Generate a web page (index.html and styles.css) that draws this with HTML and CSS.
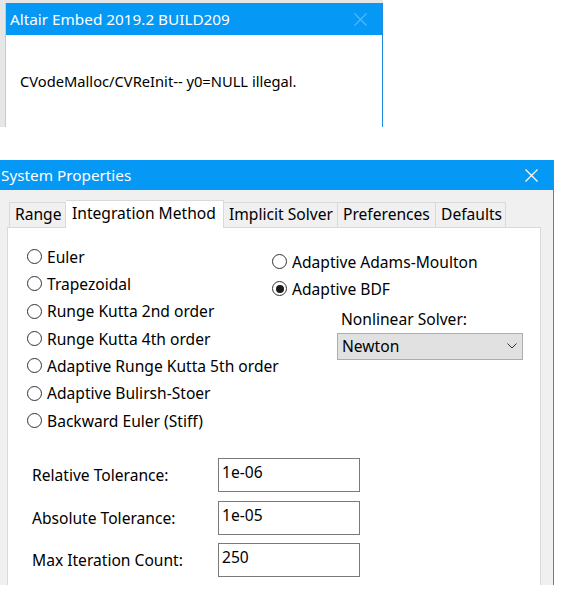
FILE: index.html
```html
<!DOCTYPE html>
<html>
<head>
<meta charset="utf-8">
<link rel="stylesheet" href="styles.css">
</head>
<body>
<div class="msg-wrap">
  <div class="msg">
    <div class="titlebar">
      <span class="title">Altair Embed 2019.2 BUILD209</span>
      <svg class="close inactive" width="13" height="13" viewBox="0 0 13 13"><path d="M0.5 0.5L12.5 12.5M12.5 0.5L0.5 12.5" stroke="currentColor" stroke-width="1.1" fill="none"/></svg>
    </div>
    <div class="msg-body">CVodeMalloc/CVReInit-- y0=NULL illegal.</div>
  </div>
</div>

<div class="props">
  <div class="titlebar tb2">
    <span class="title t2">System Properties</span>
    <svg class="close" width="13" height="13" viewBox="0 0 13 13"><path d="M0.5 0.5L12.5 12.5M12.5 0.5L0.5 12.5" stroke="currentColor" stroke-width="1.2" fill="none"/></svg>
  </div>
  <div class="props-body">
    <div class="tabs">
      <div class="tab w-range">Range</div>
      <div class="tab active w-int">Integration Method</div>
      <div class="tab w-imp">Implicit Solver</div>
      <div class="tab w-pref">Preferences</div>
      <div class="tab w-def">Defaults</div>
    </div>
    <div class="panel">
      <div class="methods">
        <div class="col-left">
          <div class="radio"><span class="dot"></span>Euler</div>
          <div class="radio"><span class="dot"></span>Trapezoidal</div>
          <div class="radio"><span class="dot"></span>Runge Kutta 2nd order</div>
          <div class="radio"><span class="dot"></span>Runge Kutta 4th order</div>
          <div class="radio"><span class="dot"></span>Adaptive Runge Kutta 5th order</div>
          <div class="radio"><span class="dot"></span>Adaptive Bulirsh-Stoer</div>
          <div class="radio"><span class="dot"></span>Backward Euler (Stiff)</div>
        </div>
        <div class="col-right">
          <div class="radio"><span class="dot"></span>Adaptive Adams-Moulton</div>
          <div class="radio"><span class="dot checked"></span>Adaptive BDF</div>
          <div class="solver-label">Nonlinear Solver:</div>
          <div class="select">
            <span>Newton</span>
            <svg class="chev" width="10" height="6" viewBox="0 0 10 6"><path d="M0.5 0.5L5 5L9.5 0.5" stroke="#333" stroke-width="1" fill="none"/></svg>
          </div>
        </div>
      </div>
      <div class="tols">
        <div class="tol-row"><span class="tol-label">Relative Tolerance:</span><div class="tol-box">1e-06</div></div>
        <div class="tol-row"><span class="tol-label">Absolute Tolerance:</span><div class="tol-box">1e-05</div></div>
        <div class="tol-row"><span class="tol-label">Max Iteration Count:</span><div class="tol-box">250</div></div>
      </div>
    </div>
  </div>
</div>
</body>
</html>
```

FILE: styles.css
```css
html, body {
  margin: 0;
  padding: 0;
  background: #ffffff;
}
body {
  font-family: "Noto Sans", "Open Sans", "Liberation Sans", sans-serif;
  font-size: 15.6px;
  color: #000;
  width: 582px;
  height: 608px;
  overflow: hidden;
}

/* ---------- message box ---------- */
.msg-wrap {
  width: 383px;
  height: 127px;
  box-sizing: border-box;
  padding: 3px 0 0 5px;
  background: #e6e6e6;
  display: flex;
}
.msg {
  flex: 1;
  background: #fff;
  border-left: 1px solid #c9c9c9;
  border-right: 1px solid #1e8be0;
  display: flex;
  flex-direction: column;
}
.titlebar {
  height: 32px;
  background: #0598f5;
  display: flex;
  align-items: center;
  justify-content: space-between;
  color: #fff;
}
.title {
  padding-left: 4px;
  line-height: 20px;
  font-size: 15.3px;
  color: #fff;
}
.close {
  margin-right: 15px;
  color: #fff;
}
.close.inactive {
  color: #55b8f8;
}
.msg-body {
  padding: 36px 0 0 14px;
  line-height: 20px;
  font-size: 14.7px;
}

/* ---------- properties dialog ---------- */
.props {
  margin-top: 33px;
  width: 554px;
  height: 425px;
  box-sizing: border-box;
  background: #f0f0f0;
  border-right: 1px solid #2d8fdc;
  overflow: hidden;
  display: flex;
  flex-direction: column;
}
.tb2 {
  height: 30px;
  flex: none;
}
.t2 {
  padding-left: 1px;
}
.props-body {
  padding-left: 7px;
  display: flex;
  flex-direction: column;
}
.tabs {
  margin-top: 10px;
  padding-left: 2px;
  display: flex;
  align-items: flex-end;
  height: 28px;
  margin-bottom: -1px;
  position: relative;
  z-index: 1;
}
.tab {
  box-sizing: border-box;
  height: 25px;
  margin-bottom: 1px;
  border: 1px solid #d9d9d9;
  border-bottom: none;
  border-left: none;
  background: #f0f0f0;
  line-height: 22px;
  padding-left: 5px;
  white-space: nowrap;
}
.tab:first-child {
  border-left: 1px solid #d9d9d9;
}
.tab.active {
  height: 28px;
  margin-bottom: 0;
  background: #fff;
  line-height: 24px;
  padding-left: 6px;
}
.w-range { width: 57px; }
.w-int { width: 158px; }
.w-imp { width: 114px; }
.w-pref { width: 98px; }
.w-def { width: 70px; }

.panel {
  width: 534px;
  height: 400px;
  box-sizing: border-box;
  background: #fff;
  border: 1px solid #d9d9d9;
}
.methods {
  display: grid;
  grid-template-columns: 245px 1fr;
  padding: 15px 0 0 19px;
}
.radio {
  height: 27.33px;
  display: flex;
  align-items: center;
  white-space: nowrap;
}
.dot {
  width: 15px;
  height: 15px;
  box-sizing: border-box;
  border: 1px solid #333;
  border-radius: 50%;
  margin-right: 5px;
  display: flex;
  align-items: center;
  justify-content: center;
  flex: none;
}
.dot.checked::after {
  content: "";
  width: 8px;
  height: 8px;
  border-radius: 50%;
  background: #1a1a1a;
}
.col-right {
  padding-top: 5px;
}
.solver-label {
  margin-top: 6px;
  padding-left: 69px;
  line-height: 20px;
}
.select {
  margin-top: 4px;
  margin-left: 65px;
  width: 186px;
  height: 27px;
  box-sizing: border-box;
  background: #e1e1e1;
  border: 1px solid #adadad;
  display: flex;
  align-items: center;
  justify-content: space-between;
  padding: 0 5px 0 4px;
}
.tols {
  margin-top: 24px;
  padding-left: 24px;
  display: flex;
  flex-direction: column;
  gap: 8.5px;
}
.tol-row {
  display: flex;
  align-items: center;
}
.tol-label {
  width: 186px;
  flex: none;
}
.tol-box {
  width: 142px;
  height: 34px;
  box-sizing: border-box;
  border: 1px solid #7a7a7a;
  padding: 3px 0 0 3px;
  line-height: 20px;
}
```
